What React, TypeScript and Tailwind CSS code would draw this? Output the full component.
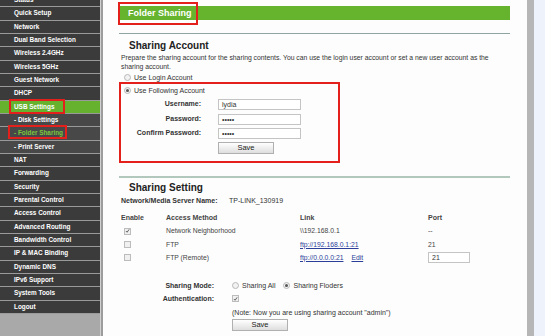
import React from "react";

const items: { t: string; kind?: "active" | "sub" | "subActive" }[] = [
  { t: "Status" },
  { t: "Quick Setup" },
  { t: "Network" },
  { t: "Dual Band Selection" },
  { t: "Wireless 2.4GHz" },
  { t: "Wireless 5GHz" },
  { t: "Guest Network" },
  { t: "DHCP" },
  { t: "USB Settings", kind: "active" },
  { t: "- Disk Settings", kind: "sub" },
  { t: "- Folder Sharing", kind: "subActive" },
  { t: "- Print Server", kind: "sub" },
  { t: "NAT" },
  { t: "Forwarding" },
  { t: "Security" },
  { t: "Parental Control" },
  { t: "Access Control" },
  { t: "Advanced Routing" },
  { t: "Bandwidth Control" },
  { t: "IP & MAC Binding" },
  { t: "Dynamic DNS" },
  { t: "IPv6 Support" },
  { t: "System Tools" },
  { t: "Logout" },
];

function Radio({ checked }: { checked?: boolean }) {
  return (
    <span className="inline-flex w-[7px] h-[7px] rounded-full border border-[#b8b8b8] bg-[#f2f2f2] items-center justify-center shrink-0">
      {checked && <span className="w-[3px] h-[3px] rounded-full bg-[#555]" />}
    </span>
  );
}

function Check({ checked }: { checked?: boolean }) {
  return (
    <span className="inline-flex w-[7px] h-[7px] border border-[#bcbcbc] bg-[#f0f0f0] items-center justify-center shrink-0">
      {checked && (
        <svg width="6" height="6" viewBox="0 0 6 6">
          <path d="M1 3 L2.5 4.5 L5 1" stroke="#555" strokeWidth="1.1" fill="none" />
        </svg>
      )}
    </span>
  );
}

function Input({ value, w = "w-[83px]" }: { value: string; w?: string }) {
  return (
    <div className={`${w} h-[11px] border border-[#c4c4c4] bg-white text-[7px] leading-[9px] pl-[3px] text-[#333]`}>{value}</div>
  );
}

function SaveBtn() {
  return (
    <div className="w-[56px] h-[12px] border border-[#b0b0b0] bg-gradient-to-b from-[#ffffff] to-[#dedede] text-[7.5px] leading-[10px] text-center text-[#222]">
      Save
    </div>
  );
}

export default function App() {
  return (
    <div
      className="flex w-[545px] h-[336px] overflow-hidden bg-white"
      style={{ fontFamily: '"Liberation Sans", Arial, sans-serif' }}
    >
      {/* Sidebar */}
      <div className="w-[101px] shrink-0 bg-[#a9a9a9] border-r border-[#d0d0d0] relative">
        <div className="-mt-[6px] flex flex-col">
          {items.map((it) => {
            const bg =
              it.kind === "active"
                ? "bg-[#66b22f]"
                : it.kind === "sub" || it.kind === "subActive"
                ? "bg-[#484848]"
                : "bg-[#3b3b3b]";
            const color = it.kind === "subActive" ? "text-[#7cc63a]" : "text-white";
            return (
              <div
                key={it.t}
                className={`h-[13.333px] border-b border-[#9a9a9a] ${bg} ${color} text-[6.4px] font-bold leading-[12.3px] pl-[14px] whitespace-nowrap`}
              >
                {it.t}
              </div>
            );
          })}
        </div>
        <div className="absolute left-[9px] top-[99px] w-[56px] h-[15px] border-2 border-[#e3201b]" />
        <div className="absolute left-[8px] top-[125px] w-[59px] h-[14px] border-2 border-[#e3201b]" />
      </div>
      <div className="w-[2px] shrink-0 bg-[#9c9c9c]" />

      {/* Main */}
      <div className="w-[424px] shrink-0 bg-[#fdfdfd] pl-[16px] text-[#333]">
        <div className="w-[391px]">
          <div className="relative mt-[6px] h-[14px] bg-[#66b32e] text-white text-[9px] font-bold leading-[14px] pl-[9px]">
            Folder Sharing
            <div className="absolute -left-[1px] -top-[4px] w-[80px] h-[23px] border-2 border-[#e3201b]" />
          </div>
          <div className="mt-[13px] h-[1px] bg-[#8fa5a3]" />
          <div className="mt-[6px] pl-[10px] text-[10px] font-bold leading-[12px] text-[#222]">Sharing Account</div>
          <div className="mt-[1px] pl-[2px] text-[6.8px] leading-[9px] text-[#333]">
            Prepare the sharing account for the sharing contents. You can use the login user account or set a new user account as the
            <br />
            sharing account.
          </div>
          <div className="mt-[1px] pl-[5px] flex items-center gap-[3px] text-[7px] leading-[9px] h-[10px]">
            <Radio /> Use Login Account
          </div>
          <div className="relative mt-[0px] w-[221px] h-[81px] border-2 border-[#e3201b]">
            <div className="mt-[1px] pl-[3px] flex items-center gap-[3px] text-[7px] leading-[9px] h-[10px]">
              <Radio checked /> Use Following Account
            </div>
            <div className="mt-[4px] flex flex-col gap-[3.5px]">
              {[
                ["Username:", "lydia"],
                ["Password:", "•••••"],
                ["Confirm Password:", "•••••"],
              ].map(([l, v]) => (
                <div key={l} className="flex items-center h-[11px]">
                  <div className="w-[80px] text-right text-[7px] font-bold text-[#333]">{l}</div>
                  <div className="ml-[17px]">
                    <Input value={v} />
                  </div>
                </div>
              ))}
            </div>
            <div className="mt-[3px] ml-[97px]">
              <SaveBtn />
            </div>
          </div>
          <div className="mt-[13px] h-[2px] bg-[#b3c8bd]" />
          <div className="mt-[4px] pl-[10px] text-[10px] font-bold leading-[12px] text-[#222]">Sharing Setting</div>
          <div className="mt-[2px] flex text-[7px] leading-[10px] h-[10px]">
            <div className="w-[110px] pl-[2px] font-bold">Network/Media Server Name:</div>
            <div>TP-LINK_130919</div>
          </div>
          <div className="mt-[7px] flex text-[7px] leading-[10px] h-[10px] font-bold text-[#444]">
            <div className="w-[47px] pl-[2px]">Enable</div>
            <div className="w-[134px]">Access Method</div>
            <div className="w-[128px]">Link</div>
            <div>Port</div>
          </div>
          {[
            { c: true, m: "Network Neighborhood", l: "\\\\192.168.0.1", p: "--" },
            { c: false, m: "FTP", l: "ftp://192.168.0.1:21", link: true, p: "21" },
            { c: false, m: "FTP (Remote)", l: "ftp://0.0.0.0:21", link: true, edit: true, p: "" },
          ].map((r) => (
            <div key={r.m} className="mt-[3.3px] flex items-center text-[6.8px] leading-[10px] h-[10px] text-[#444]">
              <div className="w-[47px] pl-[5px] flex items-center">
                <Check checked={r.c} />
              </div>
              <div className="w-[134px]">{r.m}</div>
              <div className="w-[128px] flex gap-[8px]">
                <span className={r.link ? "text-[#2b3f9a] underline" : ""}>{r.l}</span>
                {r.edit && <span className="text-[#2b3f9a] underline">Edit</span>}
              </div>
              <div>{r.edit ? <Input value="21" w="w-[42px]" /> : r.p}</div>
            </div>
          ))}
          <div className="mt-[18px] flex items-center text-[7px] leading-[10px] h-[10px]">
            <div className="w-[95px] text-right font-bold text-[#333]">Sharing Mode:</div>
            <div className="ml-[18px] flex items-center gap-[3px]">
              <Radio /> Sharing All
            </div>
            <div className="ml-[8px] flex items-center gap-[3px]">
              <Radio checked /> Sharing Floders
            </div>
          </div>
          <div className="mt-[3px] flex items-center text-[7px] leading-[10px] h-[10px]">
            <div className="w-[95px] text-right font-bold text-[#333]">Authentication:</div>
            <div className="ml-[18px] flex items-center">
              <Check checked />
            </div>
          </div>
          <div className="mt-[4px] ml-[113px] text-[7px] leading-[10px] h-[10px]">
            (Note: Now you are using sharing account "admin")
          </div>
          <div className="mt-[1px] ml-[113px]">
            <SaveBtn />
          </div>
        </div>
      </div>
      <div className="w-[7px] shrink-0 bg-[#b6b6b6]" />
      <div className="flex-1 bg-[#eef2fa]" />
    </div>
  );
}
